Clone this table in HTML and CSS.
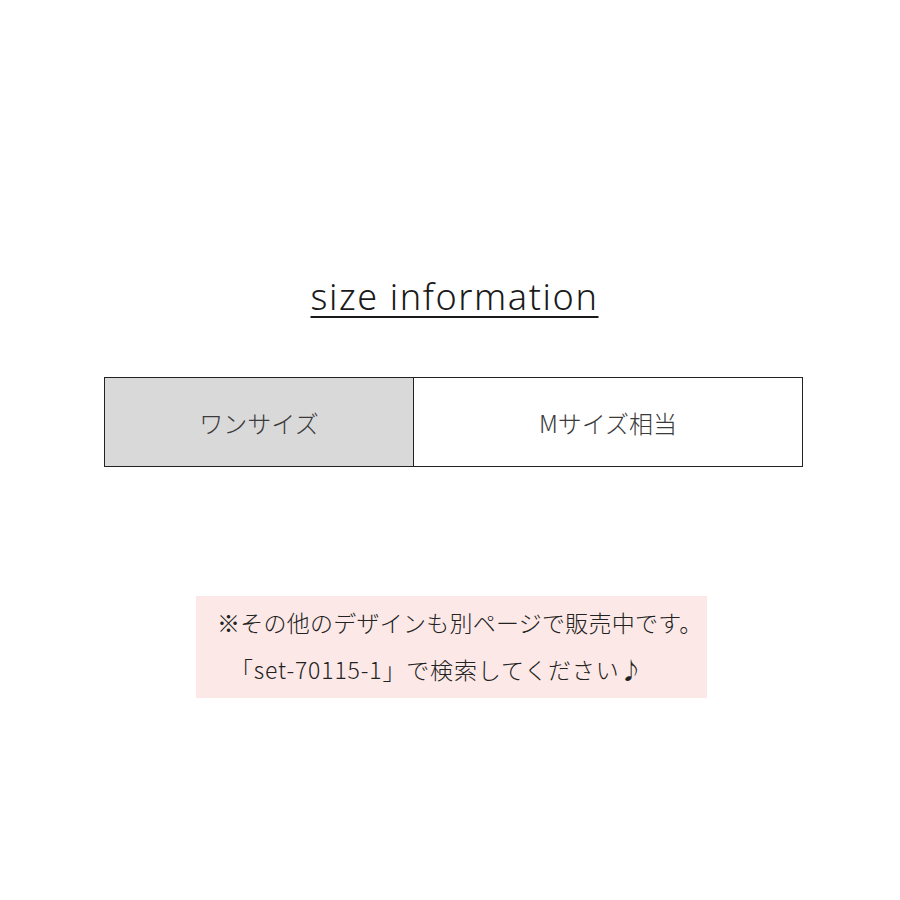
FILE: index.html
```html
<!DOCTYPE html>
<html lang="ja">
<head>
<meta charset="utf-8">
<link rel="stylesheet" href="styles.css">
</head>
<body>
<main class="page">
  <h1 class="title">size information</h1>
  <div class="size-table">
    <div class="cell cell-head">ワンサイズ</div>
    <div class="cell cell-body">Mサイズ相当</div>
  </div>
  <div class="note">
    <p>※その他のデザインも別ページで販売中です。</p>
    <p class="indent">「set-70115-1」で検索してください♪</p>
  </div>
</main>
</body>
</html>
```
FILE: styles.css
```css
html, body {
  margin: 0;
  padding: 0;
  background: #ffffff;
}
.page {
  width: 900px;
  height: 900px;
  display: flex;
  flex-direction: column;
  align-items: center;
  font-family: "Noto Sans CJK JP", "Noto Sans", sans-serif;
  color: #333333;
}
.title {
  margin: 272px 0 0 9px;
  font-family: "Noto Sans", "Noto Sans CJK JP", sans-serif;
  font-weight: 300;
  font-size: 36px;
  letter-spacing: 1.6px;
  line-height: 50px;
  color: #1a1a1a;
  text-decoration: underline;
  text-decoration-thickness: 2px;
  text-underline-offset: 6px;
}
.size-table {
  margin-top: 55px;
  margin-left: 7px;
  width: 699px;
  height: 90px;
  box-sizing: border-box;
  border: 1px solid #222222;
  display: grid;
  grid-template-columns: 309px 1fr;
}
.cell {
  display: flex;
  align-items: center;
  justify-content: center;
  font-size: 24px;
  color: #3a3a3a;
  font-weight: 300;
}
.cell-head {
  background: #d9d9d9;
  border-right: 1px solid #222222;
}
.note {
  margin-top: 129px;
  margin-left: 3px;
  width: 511px;
  height: 102px;
  box-sizing: border-box;
  background: #fce9e7;
  padding: 3px 0 0 21px;
}
.note p {
  margin: 0;
  font-size: 23px;
  letter-spacing: 0.25px;
  font-weight: 300;
  line-height: 47px;
  color: #222222;
  white-space: nowrap;
}
.note .indent {
  padding-left: 13px;
  letter-spacing: 0.85px;
}
```
